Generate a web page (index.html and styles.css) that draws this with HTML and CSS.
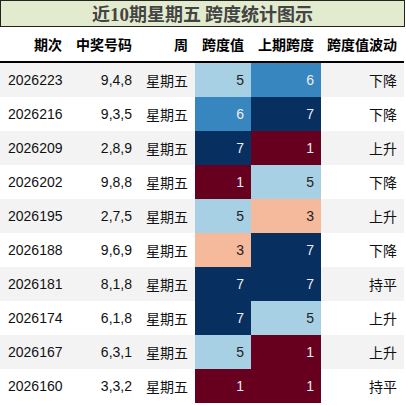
FILE: index.html
```html
<!DOCTYPE html>
<html lang="zh">
<head>
  <meta charset="UTF-8">
  <title>近10期星期五 跨度统计图示</title>
  <link rel="stylesheet" href="styles.css">
</head>
<body>
  <div class="title">近<span class="num">10</span>期星期五 跨度统计图示</div>
  <table class="stats">
    <thead>
      <tr>
        <th class="c1">期次</th>
        <th class="c2">中奖号码</th>
        <th class="c3">周</th>
        <th class="c4">跨度值</th>
        <th class="c5">上期跨度</th>
        <th class="c6">跨度值波动</th>
      </tr>
    </thead>
    <tbody>
      <tr><td class="issue">2026223</td><td>9,4,8</td><td>星期五</td><td class="s5">5</td><td class="s6">6</td><td>下降</td></tr>
      <tr><td class="issue">2026216</td><td>9,3,5</td><td>星期五</td><td class="s6">6</td><td class="s7">7</td><td>下降</td></tr>
      <tr><td class="issue">2026209</td><td>2,8,9</td><td>星期五</td><td class="s7">7</td><td class="s1">1</td><td>上升</td></tr>
      <tr><td class="issue">2026202</td><td>9,8,8</td><td>星期五</td><td class="s1">1</td><td class="s5">5</td><td>下降</td></tr>
      <tr><td class="issue">2026195</td><td>2,7,5</td><td>星期五</td><td class="s5">5</td><td class="s3">3</td><td>上升</td></tr>
      <tr><td class="issue">2026188</td><td>9,6,9</td><td>星期五</td><td class="s3">3</td><td class="s7">7</td><td>下降</td></tr>
      <tr><td class="issue">2026181</td><td>8,1,8</td><td>星期五</td><td class="s7">7</td><td class="s7">7</td><td>持平</td></tr>
      <tr><td class="issue">2026174</td><td>6,1,8</td><td>星期五</td><td class="s7">7</td><td class="s5">5</td><td>上升</td></tr>
      <tr><td class="issue">2026167</td><td>6,3,1</td><td>星期五</td><td class="s5">5</td><td class="s1">1</td><td>上升</td></tr>
      <tr><td class="issue">2026160</td><td>3,3,2</td><td>星期五</td><td class="s1">1</td><td class="s1">1</td><td>持平</td></tr>
    </tbody>
  </table>
</body>
</html>
```
FILE: styles.css
```css
body {
  margin: 0;
  background: #fff;
  font-family: "Liberation Sans", "Noto Sans CJK SC", sans-serif;
}

.title {
  width: 403px;
  height: 25px;
  line-height: 25px;
  border: 1px solid #222;
  background-color: #e3ebcf;
  color: #444;
  font-family: "Noto Sans CJK SC", sans-serif;
  font-weight: bold;
  font-size: 18px;
  text-align: center;
}

.title .num {
  font-family: "Liberation Serif", serif;
  font-size: 19px;
}

.stats {
  border-collapse: collapse;
  width: 404px;
  table-layout: fixed;
  font-size: 14px;
  color: #111;
}

.stats th {
  height: 34px;
  padding: 0 7px 0 0;
  text-align: right;
  font-weight: bold;
  font-family: "Noto Sans CJK SC", sans-serif;
  border-bottom: 2px solid #000;
  color: #000;
}

.stats td {
  height: 34px;
  padding: 0 7px 0 0;
  text-align: right;
  white-space: nowrap;
}

.stats tbody tr:nth-child(odd) {
  background-color: #f3f3f3;
}

.stats td.issue {
  text-align: left;
  padding-left: 8px;
}

.c1 { width: 62px; }
.c2 { width: 63px; }
.c3 { width: 49px; }
.c4 { width: 49px; }
.c5 { width: 63px; }
.c6 { width: 76px; }

.s1 { background-color: #67001f; color: #eee; }
.s3 { background-color: #f5b99b; color: #222; }
.s5 { background-color: #a8d0e4; color: #222; }
.s6 { background-color: #3886bf; color: #eee; }
.s7 { background-color: #072f60; color: #eee; }
```
